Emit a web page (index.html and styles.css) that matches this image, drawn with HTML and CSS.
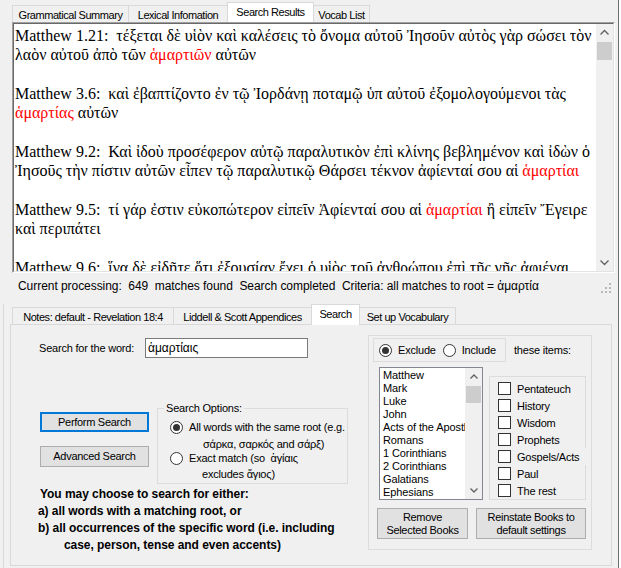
FILE: index.html
```html
<!DOCTYPE html>
<html lang="en">
<head>
<meta charset="utf-8">
<title>Search Results</title>
<link rel="stylesheet" href="styles.css">
</head>
<body>
<div class="window">
  <div class="main">
    <div class="tabstrip top">
      <div class="tab tt1">Grammatical Summary</div>
      <div class="tab tt2">Lexical Infomation</div>
      <div class="tab tt3 active">Search Results</div>
      <div class="tab tt4">Vocab List</div>
    </div>
    <div class="results">
      <div class="results-inner">
        <div class="results-text">
          <div class="ln">Matthew 1.21:  τέξεται δὲ υἱὸν καὶ καλέσεις τὸ ὄνομα αὐτοῦ Ἰησοῦν αὐτὸς γὰρ σώσει τὸν</div>
          <div class="ln">λαὸν αὐτοῦ ἀπὸ τῶν <span class="hit">ἁμαρτιῶν</span> αὐτῶν</div>
          <div class="ln"></div>
          <div class="ln">Matthew 3.6:  καὶ ἐβαπτίζοντο ἐν τῷ Ἰορδάνῃ ποταμῷ ὑπ αὐτοῦ ἐξομολογούμενοι τὰς</div>
          <div class="ln"><span class="hit">ἁμαρτίας</span> αὐτῶν</div>
          <div class="ln"></div>
          <div class="ln">Matthew 9.2:  Καὶ ἰδοὺ προσέφερον αὐτῷ παραλυτικὸν ἐπὶ κλίνης βεβλημένον καὶ ἰδὼν ὁ</div>
          <div class="ln">Ἰησοῦς τὴν πίστιν αὐτῶν εἶπεν τῷ παραλυτικῷ Θάρσει τέκνον ἀφίενταί σου αἱ <span class="hit">ἁμαρτίαι</span></div>
          <div class="ln"></div>
          <div class="ln">Matthew 9.5:  τί γάρ ἐστιν εὐκοπώτερον εἰπεῖν Ἀφίενταί σου αἱ <span class="hit">ἁμαρτίαι</span> ἢ εἰπεῖν Ἔγειρε</div>
          <div class="ln">καὶ περιπάτει</div>
          <div class="ln"></div>
          <div class="ln">Matthew 9.6:  ἵνα δὲ εἰδῆτε ὅτι ἐξουσίαν ἔχει ὁ υἱὸς τοῦ ἀνθρώπου ἐπὶ τῆς γῆς ἀφιέναι</div>
        </div>
        <div class="vscroll">
          <div class="sb-btn"><svg width="17" height="17" viewBox="0 0 17 17"><path d="M4.5 10.5 L8.5 6.5 L12.5 10.5" fill="none" stroke="#606060" stroke-width="1.3"/></svg></div>
          <div class="sb-track"><div class="sb-thumb"></div></div>
          <div class="sb-btn"><svg width="17" height="17" viewBox="0 0 17 17"><path d="M4.5 6.5 L8.5 10.5 L12.5 6.5" fill="none" stroke="#606060" stroke-width="1.3"/></svg></div>
        </div>
      </div>
    </div>
    <div class="status">
      <span class="status-text">Current processing:  649  matches found  Search completed  Criteria: all matches to root = ἁμαρτία</span>
      <svg class="grip" width="11" height="11" viewBox="0 0 11 11">
        <rect x="8" y="0" width="2" height="2" fill="#b9b9b9"/>
        <rect x="4" y="4" width="2" height="2" fill="#b9b9b9"/>
        <rect x="8" y="4" width="2" height="2" fill="#b9b9b9"/>
        <rect x="0" y="8" width="2" height="2" fill="#b9b9b9"/>
        <rect x="4" y="8" width="2" height="2" fill="#b9b9b9"/>
        <rect x="8" y="8" width="2" height="2" fill="#b9b9b9"/>
      </svg>
    </div>

    <div class="lower">
      <div class="tabstrip bottom">
        <div class="tab bt1">Notes: default - Revelation 18:4</div>
        <div class="tab bt2">Liddell &amp; Scott Appendices</div>
        <div class="tab bt3 active">Search</div>
        <div class="tab bt4">Set up Vocabulary</div>
      </div>
      <div class="page">
        <div class="left-col">
          <div class="search-row">
            <span class="search-label">Search for the word:</span>
            <div class="word-input">ἁμαρτίαις</div>
          </div>
          <div class="options-row">
            <div class="btn-col">
              <button class="btn btn-default">Perform Search</button>
              <button class="btn btn-adv">Advanced Search</button>
            </div>
            <fieldset class="opts">
              <legend>Search Options:</legend>
              <div class="opt opt1">
                <svg class="radio" width="13" height="13" viewBox="0 0 13 13"><circle cx="6.5" cy="6.5" r="6" fill="#fff" stroke="#333"/><circle cx="6.5" cy="6.5" r="3.5" fill="#333"/></svg>
                <div class="opt-text">
                  <div>All words with the same root (e.g.</div>
                  <div class="indent">σάρκα, σαρκός and σάρξ)</div>
                </div>
              </div>
              <div class="opt opt2">
                <svg class="radio" width="13" height="13" viewBox="0 0 13 13"><circle cx="6.5" cy="6.5" r="6" fill="#fff" stroke="#333"/></svg>
                <div class="opt-text">
                  <div>Exact match (so  ἁγίαις</div>
                  <div class="indent2">excludes ἅγιος)</div>
                </div>
              </div>
            </fieldset>
          </div>
          <div class="note">
            <div class="n1">You may choose to search for either:</div>
            <div>a) all words with a matching root, or</div>
            <div>b) all occurrences of the specific word (i.e. including</div>
            <div class="n4">case, person, tense and even accents)</div>
          </div>
        </div>

        <div class="books">
          <div class="books-top">
            <div class="incl-panel">
              <svg class="radio" width="13" height="13" viewBox="0 0 13 13"><circle cx="6.5" cy="6.5" r="6" fill="#fff" stroke="#333"/><circle cx="6.5" cy="6.5" r="3.5" fill="#333"/></svg>
              <span class="rlabel">Exclude</span>
              <svg class="radio r-incl" width="13" height="13" viewBox="0 0 13 13"><circle cx="6.5" cy="6.5" r="6" fill="#fff" stroke="#333"/></svg>
              <span class="rlabel">Include</span>
            </div>
            <span class="these">these items:</span>
          </div>
          <div class="books-mid">
            <div class="listbox">
              <div class="list-items">
                <div>Matthew</div>
                <div>Mark</div>
                <div>Luke</div>
                <div>John</div>
                <div>Acts of the Apostles</div>
                <div>Romans</div>
                <div>1 Corinthians</div>
                <div>2 Corinthians</div>
                <div>Galatians</div>
                <div>Ephesians</div>
              </div>
              <div class="vscroll small">
                <div class="sb-btn"><svg width="16" height="17" viewBox="0 0 16 17"><path d="M4.5 10.5 L8 7 L11.5 10.5" fill="none" stroke="#606060" stroke-width="1.3"/></svg></div>
                <div class="sb-track"><div class="sb-thumb"></div></div>
                <div class="sb-btn"><svg width="16" height="17" viewBox="0 0 16 17"><path d="M4.5 6.5 L8 10 L11.5 6.5" fill="none" stroke="#606060" stroke-width="1.3"/></svg></div>
              </div>
            </div>
            <div class="checks">
              <div class="chk"><span class="box"></span><span>Pentateuch</span></div>
              <div class="chk"><span class="box"></span><span>History</span></div>
              <div class="chk"><span class="box"></span><span>Wisdom</span></div>
              <div class="chk"><span class="box"></span><span>Prophets</span></div>
              <div class="chk wide"><span class="box"></span><span>Gospels/Acts</span></div>
              <div class="chk"><span class="box"></span><span>Paul</span></div>
              <div class="chk"><span class="box"></span><span>The rest</span></div>
            </div>
          </div>
          <div class="books-btns">
            <button class="btn btn-remove">Remove<br>Selected Books</button>
            <button class="btn btn-reinstate">Reinstate Books to<br>default settings</button>
          </div>
        </div>
      </div>
    </div>
  </div>
  <div class="edge"></div>
</div>
</body>
</html>
```
FILE: styles.css
```css
* { box-sizing: border-box; }
html, body { margin: 0; padding: 0; }
body {
  width: 621px;
  height: 568px;
  overflow: hidden;
  background: #f0f0f0;
  font-family: "Liberation Sans", Arial, sans-serif;
  font-size: 11px;
  letter-spacing: -0.2px;
  color: #000;
}
.window { display: flex; width: 621px; height: 568px; }
.main { width: 618px; flex: none; }
.edge { flex: 1; border-left: 1px solid #6f6f6f; background: #fff; }

/* tabs */
.tabstrip { display: flex; align-items: flex-end; padding-left: 12px; }
.tabstrip.top { height: 22px; }
.tabstrip.bottom { height: 20px; }
.tab {
  height: 17px;
  border: 1px solid #d9d9d9;
  border-bottom: none;
  background: #f0f0f0;
  display: flex;
  align-items: center;
  justify-content: center;
  white-space: nowrap;
  letter-spacing: -0.45px;
  margin-left: -1px;
  padding-top: 1px;
}
.tab:first-child { margin-left: 0; }
.tab.active { height: 20px; background: #fff; padding-top: 0; padding-bottom: 2px; position: relative; }
.tt1 { width: 117px; }
.tt2 { width: 100px; }
.tt3 { width: 87px; }
.tt4 { width: 57px; }
.bt1 { width: 162px; }
.bt2 { width: 139px; }
.bt3 { width: 49px; }
.bt4 { width: 97px; }
.tabstrip.bottom .tab.active { margin-bottom: -1px; height: 21px; padding-bottom: 3px; }

/* results */
.results {
  margin-left: 12px;
  width: 603px;
  height: 251px;
  border-top: 1px solid #a0a0a0;
  border-left: 1px solid #a0a0a0;
  border-right: 1px solid #ffffff;
  border-bottom: 1px solid #ffffff;
}
.results-inner {
  display: flex;
  height: 100%;
  background: #fff;
  border-top: 1px solid #696969;
  border-left: 1px solid #696969;
  border-right: 1px solid #e3e3e3;
  border-bottom: 1px solid #e3e3e3;
}
.results-text {
  flex: 1;
  overflow: hidden;
  padding: 2px 0 0 1px;
  font-family: "Liberation Serif", "Times New Roman", serif;
  font-size: 16px;
  letter-spacing: 0;
  line-height: 19.3px;
}
.ln { height: 19.3px; white-space: pre; }
.hit { color: #ff0000; }

.vscroll { width: 17px; flex: none; display: flex; flex-direction: column; background: #f0f0f0; }
.sb-btn { height: 17px; flex: none; display: flex; align-items: center; justify-content: center; }
.sb-btn svg { display: block; }
.sb-track { flex: 1; }
.sb-thumb { margin: 1px 1px 0 1px; height: 18px; background: #cdcdcd; }

/* status */
.status {
  margin-left: 12px;
  width: 602px;
  height: 25px;
  display: flex;
  align-items: center;
  justify-content: space-between;
  padding: 0 2px 0 6px;
  white-space: pre;
  font-size: 12px;
  letter-spacing: -0.05px;
}
.grip { display: block; margin-top: 6px; }

/* lower */
.lower {
  margin-top: 6px;
  background: linear-gradient(#d9d9d9, #d9d9d9) 3px 0 / 1px 100% no-repeat;
  height: 264px;
}
.page {
  margin-left: 10px;
  width: 602px;
  height: 242px;
  border: 1px solid #d9d9d9;
  display: flex;
  align-items: flex-start;
  gap: 20px;
  padding: 10px 0 0 27px;
}
.left-col { width: 310px; flex: none; }
.search-row { margin-top: 3px; display: flex; align-items: center; height: 20px; }
.search-label { width: 107px; padding-left: 1px; white-space: nowrap; }
.word-input {
  width: 163px;
  height: 20px;
  border: 1px solid #7a7a7a;
  background: #fff;
  padding: 2px 0 0 2px;
  font-size: 12px;
  letter-spacing: 0;
}
.options-row { display: flex; gap: 8px; margin-top: 43px; align-items: flex-start; }
.btn-col { margin-left: 2px; width: 109px; display: flex; flex-direction: column; }
.btn {
  font-family: inherit;
  font-size: 11px;
  letter-spacing: -0.3px;
  color: #000;
  background: #e1e1e1;
  border: 1px solid #adadad;
  padding: 0;
  margin: 0;
  line-height: 13px;
}
.btn-default { margin-top: 11px; height: 20px; border: 2px solid #0078d7; }
.btn-adv { margin-top: 14px; height: 21px; }

.opts {
  width: 191px;
  margin: 0;
  padding: 4px 0 1px 6px;
  border: 1px solid #dcdcdc;
  min-width: 0;
}
.opts legend { padding: 0 2px; line-height: 14px; }
.opt { display: flex; align-items: flex-start; }
.opt .radio { flex: none; margin-left: 6px; margin-right: 6px; }
.opt1 .opt-text { line-height: 17px; }
.opt1 .radio { margin-top: 2px; }
.opt2 { margin-top: -3px; }
.opt2 .opt-text { line-height: 16px; }
.opt2 .radio { margin-top: 2px; }
.opt-text div { white-space: pre; }
.indent { padding-left: 14px; }
.indent2 { padding-left: 13px; }
.radio { display: block; }

.note {
  margin-top: 2px;
  font-weight: bold;
  font-size: 12px;
  letter-spacing: -0.05px;
  line-height: 17px;
  white-space: nowrap;
}
.n1 { padding-left: 2px; }
.n4 { padding-left: 26px; }

/* books group */
.books {
  width: 224px;
  height: 215px;
  border: 1px solid #dcdcdc;
  flex: none;
}
.books-top { display: flex; align-items: center; margin: 2px 0 0 4px; }
.incl-panel {
  width: 133px;
  height: 24px;
  border: 1px solid #dcdcdc;
  display: flex;
  align-items: center;
  padding-left: 5px;
}
.rlabel { margin-left: 6px; }
.r-incl { margin-left: 7px; }
.these { margin-left: 8px; }
.books-mid { display: flex; align-items: flex-start; margin: 5px 0 0 10px; }
.listbox {
  width: 104px;
  height: 133px;
  border: 1px solid #828790;
  background: #fff;
  display: flex;
  overflow: hidden;
}
.list-items {
  flex: 1;
  overflow: hidden;
  padding: 1px 0 0 3px;
  line-height: 13px;
  white-space: nowrap;
  letter-spacing: -0.1px;
}
.vscroll.small { width: 17px; }
.vscroll.small .sb-thumb { margin: 1px 1px 0 1px; height: 17px; }
.checks {
  margin-left: 6px;
  margin-top: 9px;
  width: 97px;
  height: 124px;
  border: 1px solid #dcdcdc;
  padding: 3px 0 0 8px;
}
.chk { display: flex; align-items: center; height: 17px; white-space: nowrap; }
.chk .box { width: 13px; height: 13px; border: 1px solid #333; background: #fff; margin-right: 6px; flex: none; }
.chk.wide { margin-right: -2px; background: #f0f0f0; }
.books-btns { display: flex; gap: 8px; margin: 8px 0 0 8px; }
.btn-remove { width: 91px; height: 31px; }
.btn-reinstate { width: 110px; height: 31px; }
```
